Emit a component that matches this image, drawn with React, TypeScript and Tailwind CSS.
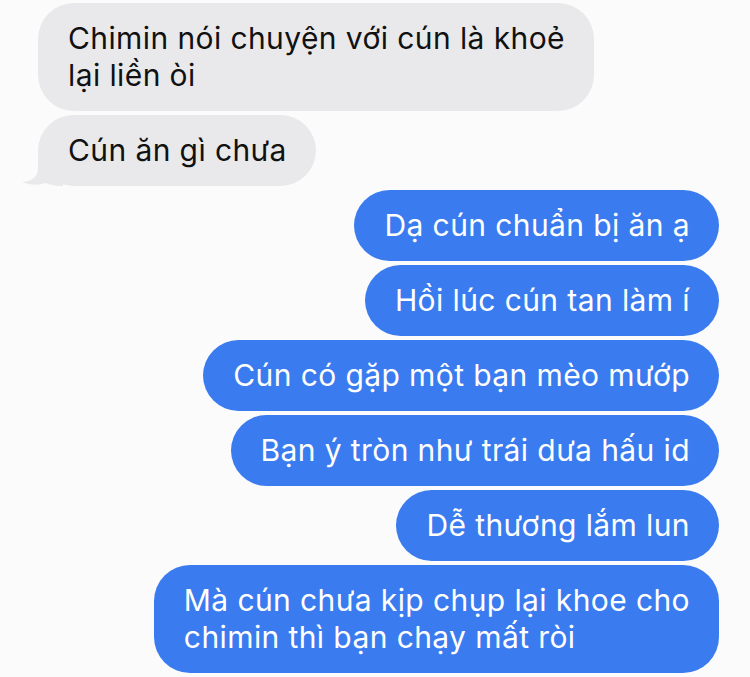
const incoming = [
  { lines: ["Chimin nói chuyện với cún là khoẻ", "lại liền òi"] },
  { lines: ["Cún ăn gì chưa"], tail: true },
];

const outgoing = [
  ["Dạ cún chuẩn bị ăn ạ"],
  ["Hồi lúc cún tan làm í"],
  ["Cún có gặp một bạn mèo mướp"],
  ["Bạn ý tròn như trái dưa hấu id"],
  ["Dễ thương lắm lun"],
  ["Mà cún chưa kịp chụp lại khoe cho", "chimin thì bạn chạy mất ròi"],
];

function Bubble({ lines, mine, tail }: { lines: string[]; mine?: boolean; tail?: boolean }) {
  return (
    <div
      className={
        "relative rounded-[36px] py-[17px] pl-[30px] pr-[29px] text-[30px] leading-[37px] tracking-[0.4px] whitespace-nowrap " +
        (mine ? "bg-[#3a7bf0] text-white" : "bg-[#e9e9eb] text-[#111111]")
      }
    >
      {lines.map((l, i) => (
        <div key={i}>{l}</div>
      ))}
      {tail && (
        <svg className="absolute left-[-17px] bottom-0" width="42" height="36" viewBox="0 0 42 36">
          <path d="M17 4 L17 18 Q17 31 1 32 Q12 37 25 33 Q31 36 42 36 L42 4 Z" fill="#e9e9eb" />
        </svg>
      )}
    </div>
  );
}

export default function App() {
  return (
    <main
      className="w-[750px] h-[677px] overflow-hidden bg-[#fbfbfb] pt-[3px]"
      style={{ fontFamily: "Inter, 'Noto Sans', sans-serif" }}
    >
      {/* Received */}
      <div className="flex flex-col items-start gap-1 pl-[38px]">
        {incoming.map((m, i) => (
          <Bubble key={i} lines={m.lines} tail={m.tail} />
        ))}
      </div>

      {/* Sent */}
      <div className="mt-1 flex flex-col items-end gap-1 pr-[31px]">
        {outgoing.map((lines, i) => (
          <Bubble key={i} lines={lines} mine />
        ))}
      </div>
    </main>
  );
}
